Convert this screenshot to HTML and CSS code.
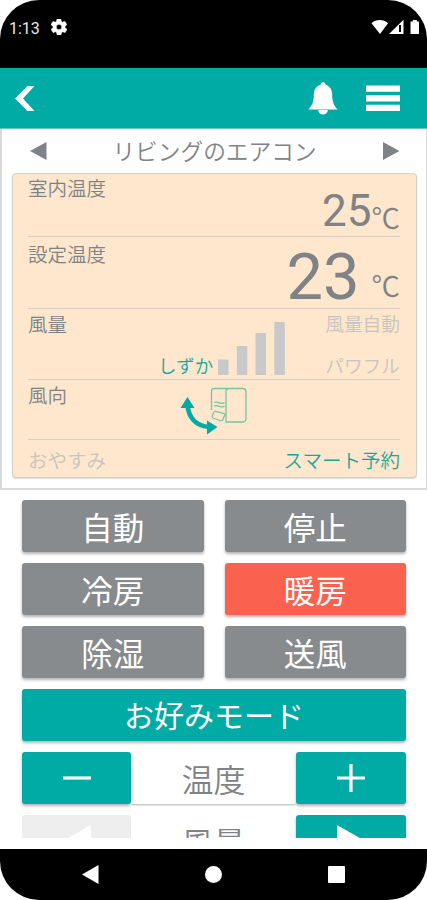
FILE: index.html
```html
<!DOCTYPE html>
<html lang="ja">
<head>
<meta charset="utf-8">
<title>リビングのエアコン</title>
<link rel="stylesheet" href="styles.css">
</head>
<body>
<div class="phone">
  <div class="status">
    <span class="clock">1:13</span>
    <svg class="gear" width="16" height="16" viewBox="2 2 20 20"><path fill="#fff" stroke="#fff" stroke-width=".8" fill-rule="evenodd" d="M19.4 13c0-.3.1-.6.1-1s0-.7-.1-1l2.1-1.6c.2-.1.2-.4.1-.6l-2-3.5c-.1-.2-.4-.3-.6-.2l-2.5 1c-.5-.4-1.100-.7-1.700-1l-.4-2.600c0-.3-.2-.5-.5-.5h-4c-.2 0-.4.200-.5.500l-.4 2.600c-.6.300-1.200.600-1.700 1l-2.500-1c-.2-.1-.5 0-.6.200l-2 3.500c-.1.200-.1.500.1.600L4.600 11c-.1.300-.1.700-.1 1s0 .7.100 1l-2.100 1.600c-.2.100-.3.400-.1.600l2 3.500c.1.200.4.300.6.200l2.500-1c.5.400 1.100.700 1.700 1l.4 2.600c0 .3.200.5.500.5h4c.2 0 .4-.2.500-.5l.4-2.600c.6-.3 1.200-.6 1.700-1l2.500 1c.2.100.5 0 .6-.2l2-3.500c.1-.2.100-.5-.1-.6zM12 15.500a3.500 3.500 0 1 1 0-7 3.500 3.500 0 0 1 0 7z"/></svg>
    <svg class="signals" width="50" height="16" viewBox="0 0 50 16"><path fill="#fff" d="M.5 4.200C5-.2 12.500-.2 17 4.200L9 15zM18 15 32.500.8V15z"/><path fill="#000" d="M28 6h2v7h-2z"/><path fill="#fff" d="M39.500 2.500h2.300V1h4v1.500h2.200V15h-8.500z"/></svg>
  </div>
  <header class="bar">
    <svg width="20" height="27" viewBox="0 0 20 27"><path fill="#fff" d="M0 13.500 12.500 1h7L8 13.500 19.500 26h-7z"/></svg>
    <svg class="bell" width="30" height="33" viewBox="0 0 30 33"><path fill="#fff" d="M12.500 2.800a2.500 2.500 0 0 1 5 0C22 4 24.200 8 24.200 13c0 7 1.800 10.500 5.300 14.500H.5C4 23.500 5.800 20 5.800 13c0-5 2.200-9 6.700-10.200zM10.200 28h9.600c0 2.700-2.100 4.500-4.800 4.500s-4.800-1.800-4.800-4.500z"/></svg>
    <svg class="menu" width="34" height="27" viewBox="0 0 34 27"><path fill="#fff" d="M0 .5h34v6.300H0zM0 10.200h34v6.300H0zM0 19.800h34v6.200H0z"/></svg>
  </header>
  <section class="panel">
    <div class="title">
      <svg width="17" height="18" viewBox="0 0 17 18"><path d="M0 9 16.500 0v18z" fill="#808386"/></svg>
      <span>リビングのエアコン</span>
      <svg width="17" height="18" viewBox="0 0 17 18"><path d="M16.500 9 0 0v18z" fill="#808386"/></svg>
    </div>
    <div class="card">
      <div class="row room"><span class="label">室内温度</span><span class="temp">25</span><span class="unit">℃</span></div>
      <div class="row target"><span class="label">設定温度</span><span class="temp">23</span><span class="unit">℃</span></div>
      <div class="row fan">
        <span class="label">風量</span>
        <span class="quiet">しずか</span>
        <svg class="bars" width="68" height="54" viewBox="0 0 68 54"><path fill="#c8c9cb" d="M0 38.500h10.500V54H0zM18.800 25h10.500v29H18.800zM37.500 12H48v42H37.500zM56.300 1h10.500v53H56.300z"/></svg>
        <span class="options"><span>風量自動</span><span>パワフル</span></span>
      </div>
      <div class="row direction">
        <span class="label">風向</span>
        <svg class="swing" width="68" height="54" viewBox="0 0 68 54">
          <path d="M6.500 22c1 12 8 21.500 22 22" fill="none" stroke="#00aaa5" stroke-width="4.600"/>
          <path fill="#00aaa5" d="M-.5 25 6.500 14 13.500 25zM26 37.500l10.500 6.500L26 51.500z"/>
          <g fill="none" stroke="#77c4a4" stroke-width="1.300"><path d="M30.500 27V8.500q0-3 3-3h28q3.500 0 3.500 3.500v26.500q0 3.500-3.500 3.500H45V9q0-3.500 3-3.500M45 38v-3"/><path d="M33 19.500c4-2 7 3 10.500 0M33 23c4-2 7 3 10.500 0"/><path d="M32 31q1-4 5-2l6 1.500q2 1 0 3l-1 3q-1 2-3 1l-6-2q-3-1-1-4.500z"/></g>
        </svg>
      </div>
      <div class="row foot"><span>おやすみ</span><span class="smart">スマート予約</span></div>
    </div>
  </section>
  <main class="controls">
    <div class="modes">
      <div class="btn">自動</div><div class="btn">停止</div>
      <div class="btn">冷房</div><div class="btn heat">暖房</div>
      <div class="btn">除湿</div><div class="btn">送風</div>
    </div>
    <div class="btn teal favorite">お好みモード</div>
    <div class="stepper">
      <div class="btn teal"><svg width="28" height="28" viewBox="0 0 28 28"><path stroke="#fff" stroke-width="3.200" d="M0 14h28"/></svg></div>
      <div class="name">温度</div>
      <div class="btn teal"><svg width="28" height="28" viewBox="0 0 28 28"><path stroke="#fff" stroke-width="3.200" d="M0 14h28M14 0v28"/></svg></div>
    </div>
    <div class="stepper">
      <div class="btn off"><svg width="28" height="32" viewBox="0 0 28 32"><path fill="#fff" d="M28 0v32L0 16z"/></svg></div>
      <div class="name">風量</div>
      <div class="btn teal"><svg width="28" height="32" viewBox="0 0 28 32"><path fill="#fff" d="M0 0v32l28-16z"/></svg></div>
    </div>
  </main>
  <nav class="nav">
    <svg width="17" height="19" viewBox="0 0 17 19"><path fill="#fff" d="M0 9.500 16.500 0v19z"/></svg>
    <span class="home"></span>
    <span class="recent"></span>
  </nav>
</div>
</body>
</html>
```
FILE: styles.css
```css
* { box-sizing: border-box; }
body { margin: 0; background: #fff; font-family: "Noto Sans CJK JP", sans-serif; font-weight: 350; color: #808386; }
svg { display: block; flex: none; }
.phone { width: 427px; height: 900px; display: flex; flex-direction: column; overflow: hidden; border-radius: 39px; background: #fff; }
.status { flex: none; height: 68px; background: #000; color: #e8e8e8; display: flex; align-items: flex-start; padding: 19px 6px 0 9px; }
.clock { font: 400 16px/19px Roboto, sans-serif; width: 42px; }
.signals { margin-left: auto; }
.bar { flex: none; height: 61px; background: #00aaa5; display: flex; align-items: center; padding: 1px 27px 0 15px; border-bottom: 1px solid #72bfbc; }
.bell { margin-left: auto; }
.menu { margin-left: 28px; }
.panel { flex: none; height: 361px; border: 2px solid #d9dadb; border-width: 0 1px 2px 2px; padding: 0 9.500px; }
.title { height: 44px; display: flex; align-items: center; justify-content: space-between; padding: 0 17px 0 18px; font-size: 22.700px; }
.title span { margin-top: -1px; }
.card { height: 305px; background: #fee7cd; border: 1.500px solid #d3d0c4; border-radius: 4px; padding: 0 15.500px; display: flex; flex-direction: column; box-shadow: 0 1px 1px #ddd; }
.row { flex: none; display: flex; border-bottom: 1.500px solid #d5d0c8; line-height: 1; }
.label { font-size: 19.500px; line-height: 28px; }
.room { height: 63px; }
.target { height: 71.500px; }
.fan { height: 71px; }
.direction { height: 60px; }
.temp { font-family: Roboto, sans-serif; font-weight: 400; margin-left: auto; }
.room .temp { font-size: 44px; line-height: 74px; }
.target .temp { font-size: 65px; line-height: 80px; }
.target .label { line-height: 33px; }
.unit { font-size: 28.500px; line-height: 36px; margin-top: 25px; }
.target .unit { margin: 30px 0 0 12px; }
.fan .label, .direction .label { width: 39px; line-height: 30px; }
.quiet { margin-left: 91px; width: 60px; font-size: 18.500px; line-height: 30px; margin-top: 41px; color: #1ba59b; }
.bars { margin-top: 12px; }
.options { margin-left: auto; display: flex; flex-direction: column; font-size: 18.700px; color: #c8c4c0; }
.options span { line-height: 28px; }
.options span + span { margin-top: 14px; }
.swing { margin: 3px 0 0 114px; overflow: visible; }
.foot { flex: 1; border: 0; align-items: center; justify-content: space-between; font-size: 19.500px; color: #c8c4c0; padding-top: 2px; }
.smart { color: #1ba59b; }
.controls { flex: none; height: 348px; padding: 10px 21px 0 22px; overflow: hidden; display: flex; flex-direction: column; gap: 11px; }
.modes { display: grid; grid-template-columns: 1fr 1fr; gap: 11px 21px; }
.btn { height: 52px; background: #888b8d; color: #fff; border-radius: 3px; box-shadow: 0 2px 3px rgba(0,0,0,.3); display: flex; align-items: center; justify-content: center; font-size: 31.500px; font-weight: 400; line-height: 52px; padding-bottom: 1px; }
.heat { background: #fb614f; }
.teal { background: #00aaa5; }
.favorite { flex: none; font-size: 30px; padding-bottom: 3px; }
.stepper { flex: none; display: grid; grid-template-columns: 109px 1fr 110px; }
.name { text-align: center; font-size: 32px; line-height: 52px; box-shadow: 0 2px 2px -1px rgba(0,0,0,.3); height: 52px; }
.off { background: #eee; box-shadow: none; }
.nav { flex: none; margin-top: auto; height: 51px; background: #000; display: flex; align-items: center; padding: 0 82px; justify-content: space-between; }
.home { width: 17px; height: 17px; border-radius: 50%; background: #fff; }
.recent { width: 17px; height: 17px; border-radius: 1px; background: #fff; }
```
